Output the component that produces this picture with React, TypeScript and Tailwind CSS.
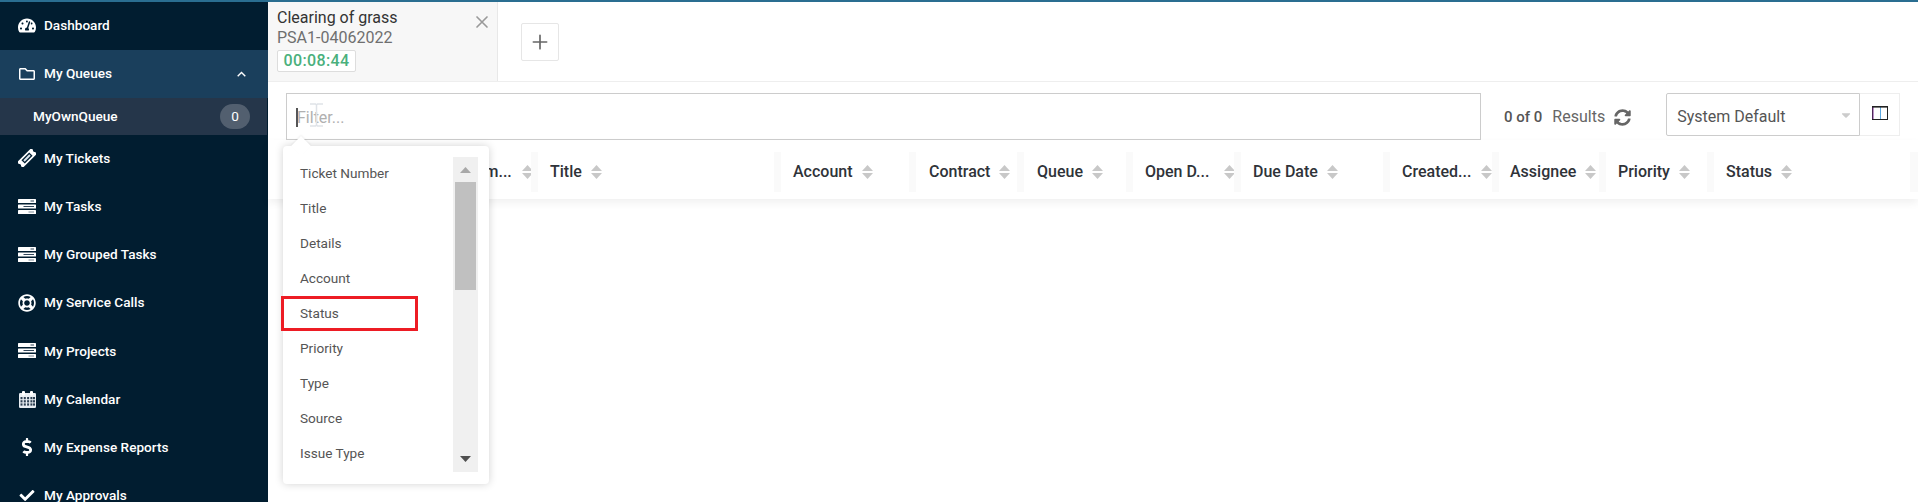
import React from "react";
import { FaTachometerAlt, FaRegFolder, FaRegLifeRing, FaDollarSign, FaCheck, FaSyncAlt, FaCaretDown } from "react-icons/fa";
import { HiOutlinePlus, HiOutlineX } from "react-icons/hi";

const TasksIcon = () => (
  <svg viewBox="0 0 18 15" className="h-[15px] w-[18px]">
    <rect x="0" y="0" width="18" height="4" rx="0.6" fill="#fff" />
    <rect x="0" y="5.5" width="18" height="4" rx="0.6" fill="#fff" />
    <rect x="0" y="11" width="18" height="4" rx="0.6" fill="#fff" />
    <rect x="12.5" y="1.5" width="3.5" height="1" fill="#33475b" />
    <rect x="5.5" y="7" width="10.5" height="1" fill="#33475b" />
    <rect x="10.5" y="12.5" width="5.5" height="1" fill="#7d8a96" />
  </svg>
);

const TicketIcon = () => (
  <svg viewBox="0 0 18 18" className="h-[18px] w-[18px]" fill="none">
    <g transform="rotate(-45 9 9)">
      <path d="M-1 5H19V7.6a1.5 1.5 0 0 0 0 2.8V13H-1V10.4a1.5 1.5 0 0 0 0-2.8Z" fill="#fff" />
      <rect x="3.5" y="6.6" width="11" height="4.8" fill="#011d30" />
      <rect x="4.8" y="8" width="8.4" height="2" fill="#dce6ee" />
    </g>
  </svg>
);

const CalendarIcon = () => (
  <svg viewBox="0 0 17 17" className="h-[17px] w-[17px]">
    <rect x="0" y="2" width="17" height="15" rx="1.2" fill="#e8edf2" />
    <rect x="3" y="0" width="3" height="4.5" rx="1" fill="#fff" />
    <rect x="11" y="0" width="3" height="4.5" rx="1" fill="#fff" />
    {[6, 9.2, 12.4].map((y) =>
      [1.5, 4.8, 8.1, 11.4, 14].map((x) => <rect key={`${x}-${y}`} x={x} y={y} width="2" height="2.2" fill="#2c3f52" />)
    )}
  </svg>
);

const SortIcon = ({ className = "" }: { className?: string }) => (
  <svg viewBox="0 0 11 14" className={`h-[14px] w-[11px] shrink-0 ${className}`} fill="#c8c8c8">
    <path d="M5.5 0 11 6H0Z" />
    <path d="M5.5 14 0 8H11Z" />
  </svg>
);

const ColumnsIcon = () => (
  <svg viewBox="0 0 16 14" className="h-[14px] w-[16px]" fill="none">
    <rect x="0.5" y="0.5" width="15" height="13" stroke="#222" />
    <rect x="0.5" y="1" width="1" height="12" fill="#7a2a90" />
    <rect x="8" y="1" width="1" height="12" fill="#5aa7e0" />
    <rect x="0" y="0" width="16" height="1.6" fill="#222" />
  </svg>
);

const navAfter = [
  { label: "My Tickets", icon: <TicketIcon /> },
  { label: "My Tasks", icon: <TasksIcon /> },
  { label: "My Grouped Tasks", icon: <TasksIcon /> },
  { label: "My Service Calls", icon: <FaRegLifeRing className="h-[18px] w-[18px]" /> },
  { label: "My Projects", icon: <TasksIcon /> },
  { label: "My Calendar", icon: <CalendarIcon /> },
  { label: "My Expense Reports", icon: <FaDollarSign className="h-[18px] w-[18px]" /> },
  { label: "My Approvals", icon: <FaCheck className="h-[15px] w-[16px]" /> },
];

const NavRow = ({ label, icon }: { label: string; icon: React.ReactNode }) => (
  <div className="flex h-[48.2px] shrink-0 items-center pl-[18px] text-[13.6px] font-medium text-white">
    <span className="flex w-[18px] justify-center">{icon}</span>
    <span className="ml-2">{label}</span>
  </div>
);

const columns = [
  { label: "Ticket Num...", width: "w-[263px]", pad: "pl-[148px]", gap: "ml-[10px]", first: true },
  { label: "Title", width: "w-[243px]", pad: "pl-[19px]", gap: "ml-[9px]" },
  { label: "Account", width: "w-[135px]", pad: "pl-[19px]", gap: "ml-[9px]" },
  { label: "Contract", width: "w-[108px]", pad: "pl-[20px]", gap: "ml-[9px]" },
  { label: "Queue", width: "w-[109px]", pad: "pl-[20px]", gap: "ml-[9px]" },
  { label: "Open D...", width: "w-[108px]", pad: "pl-[19px]", gap: "ml-[15px]" },
  { label: "Due Date", width: "w-[149px]", pad: "pl-[19px]", gap: "ml-[9px]" },
  { label: "Created...", width: "w-[109px]", pad: "pl-[19px]", gap: "ml-[10px]" },
  { label: "Assignee", width: "w-[107px]", pad: "pl-[18px]", gap: "ml-[9px]" },
  { label: "Priority", width: "w-[108px]", pad: "pl-[19px]", gap: "ml-[9px]" },
  { label: "Status", width: "w-[203px]", pad: "pl-[19px]", gap: "ml-[9px]" },
];

const filterItems = ["Ticket Number", "Title", "Details", "Account", "Status", "Priority", "Type", "Source", "Issue Type"];

export default function App() {
  return (
    <div className="flex h-screen w-full flex-col overflow-hidden bg-white font-['Roboto',sans-serif]">
      <div className="h-[2px] shrink-0 bg-[#2a6e91]" />
      <div className="flex min-h-0 flex-1">
        <aside className="flex w-[268px] shrink-0 flex-col overflow-hidden bg-[#011d30]">
          <div className="flex h-12 shrink-0 items-center pb-[2px] pl-[18px] text-[13.6px] font-medium text-white">
            <span className="flex w-[18px] justify-center">
              <FaTachometerAlt className="h-[17px] w-[18px]" />
            </span>
            <span className="ml-2">Dashboard</span>
          </div>
          <div className="flex h-12 shrink-0 items-center bg-[#1a3f5c] pb-[1px] pl-[18px] pr-[22px] text-[13.6px] font-medium text-white">
            <span className="flex w-[18px] justify-center">
              <FaRegFolder className="h-[16px] w-[18px]" />
            </span>
            <span className="ml-2 flex-1">My Queues</span>
            <svg viewBox="0 0 9 6" className="h-[6px] w-[9px]" fill="none" stroke="#fff" strokeWidth="1.4">
              <path d="M0.7 5.2 4.5 1.4 8.3 5.2" />
            </svg>
          </div>
          <div className="mr-px flex h-[37px] shrink-0 items-center bg-[#25364a] pb-[1px] pl-[33px] pr-[17px] text-[13.6px] font-medium text-white">
            <span className="flex-1">MyOwnQueue</span>
            <span className="flex h-[25px] w-[30px] items-center justify-center rounded-full bg-[#525f6f] font-normal">0</span>
          </div>
          <div className="-mt-px flex flex-col">
            {navAfter.map((n) => (
              <NavRow key={n.label} {...n} />
            ))}
          </div>
        </aside>

        <main className="relative flex min-w-0 flex-1 flex-col">
          <div className="flex h-[80px] shrink-0 border-b border-[#eeeeee]">
            <div className="relative w-[230px] border-r border-[#e8e8e8] bg-[#f7f7f7] pl-[9px] pt-[6px]">
              <div className="text-[16px] leading-5 text-[#333333]">Clearing of grass</div>
              <div className="text-[16px] leading-5 text-[#6f6f6f]">PSA1-04062022</div>
              <div className="mt-[2px] flex h-[22px] w-[79px] items-center justify-center rounded-[2px] border border-[#dddddd] bg-white text-[16px] font-medium tracking-[0.4px] text-[#4ab07c]">
                00:08:44
              </div>
              <HiOutlineX className="absolute right-[5px] top-[10px] h-[20px] w-[20px] text-[#999999]" />
            </div>
            <div className="ml-[23px] mt-[21px] flex h-[38px] w-[38px] items-center justify-center rounded-[2px] border border-[#e6e6e6]">
              <HiOutlinePlus className="h-[20px] w-[20px] text-[#666666]" />
            </div>
          </div>

          <div className="flex h-[58px] shrink-0 items-start pl-[18px] pt-[11px]">
            <div className="relative flex h-[47px] w-[1195px] items-center border border-[#cccccc] pl-[9px] pt-[2px]">
              <span className="-mr-px h-[19px] w-[2px] bg-[#555555]" />
              <span className="text-[16px] text-[#b0b0b0]">Filter...</span>
              <svg viewBox="0 0 13 24" className="absolute left-[23px] top-[9px] h-[24px] w-[13px]" fill="none" stroke="#dfe3e8" strokeWidth="1.5">
                <path d="M0 1H5.5L6.5 2 7.5 1H13M6.5 2V22M0 23H5.5L6.5 22 7.5 23H13" />
              </svg>
            </div>
            <div className="ml-[23px] mt-[14px] flex items-center text-[16px] leading-5">
              <span className="text-[15px] font-medium text-[#555555]">0 of 0</span>
              <span className="ml-[10px] text-[#666666]">Results</span>
              <FaSyncAlt className="ml-[9px] h-[17px] w-[17px] text-[#666666]" />
            </div>
            <div className="ml-[35px] flex h-[43px] w-[194px] items-center justify-between rounded-l-[2px] border border-[#cccccc] pl-[10px] pr-[6px] text-[16px] text-[#555555]">
              <span className="pt-[4px]">System Default</span>
              <FaCaretDown className="h-[14px] w-[14px] text-[#cccccc]" />
            </div>
            <div className="flex h-[43px] w-[40px] items-center justify-center border border-l-0 border-[#eeeeee] pb-[4px]">
              <ColumnsIcon />
            </div>
          </div>

          <div className="flex h-[59px] shrink-0 items-center bg-white pt-[4px] text-[16px] font-medium text-[#2f3339] shadow-[0_4px_8px_rgba(0,0,0,0.06)]">
            {columns.map((c) => (
              <div key={c.label} className={`relative flex h-10 shrink-0 items-center ${c.width} ${c.pad}`}>
                {!c.first && <span className="absolute left-0 top-0 h-10 w-[7px] bg-[#fafafa]" />}
                <span className="whitespace-nowrap">{c.label}</span>
                <SortIcon className={c.gap} />
              </div>
            ))}
            <span className="h-10 w-[8px] shrink-0 bg-[#fafafa]" />
          </div>

          <div className="absolute left-[15px] top-[144px] z-10 w-[206px] rounded-[4px] bg-white shadow-[0_0_8px_rgba(0,0,0,0.18)]">
            <div className="absolute -top-[7px] left-[11px] h-[14px] w-[14px] rotate-45 bg-white shadow-[-1px_-1px_2px_rgba(0,0,0,0.06)]" />
            <div className="relative flex h-[338px] pl-[17px] pt-[11px]">
              <ul className="-mt-px w-[153px] text-[13.6px] text-[#555555]">
                {filterItems.map((item) => (
                  <li key={item} className="flex h-[35px] items-center pb-[1px]">
                    {item}
                  </li>
                ))}
              </ul>
              <div className="flex h-[315px] w-[25px] flex-col items-center bg-[#f0f0f0]">
                <svg viewBox="0 0 11 6" className="mt-[10px] h-[6px] w-[11px]" fill="#a8a8a8">
                  <path d="M5.5 0 11 6H0Z" />
                </svg>
                <div className="mt-[9px] h-[108px] w-[21px] bg-[#c0c0c0]" />
                <div className="flex-1" />
                <svg viewBox="0 0 11 6" className="mb-[10px] h-[6px] w-[11px]" fill="#505050">
                  <path d="M5.5 6 0 0H11Z" />
                </svg>
              </div>
            </div>
            <div className="absolute left-[-2px] top-[150px] h-[35px] w-[137px] border-[3px] border-[#ed1c24]" />
          </div>
        </main>
      </div>
    </div>
  );
}
